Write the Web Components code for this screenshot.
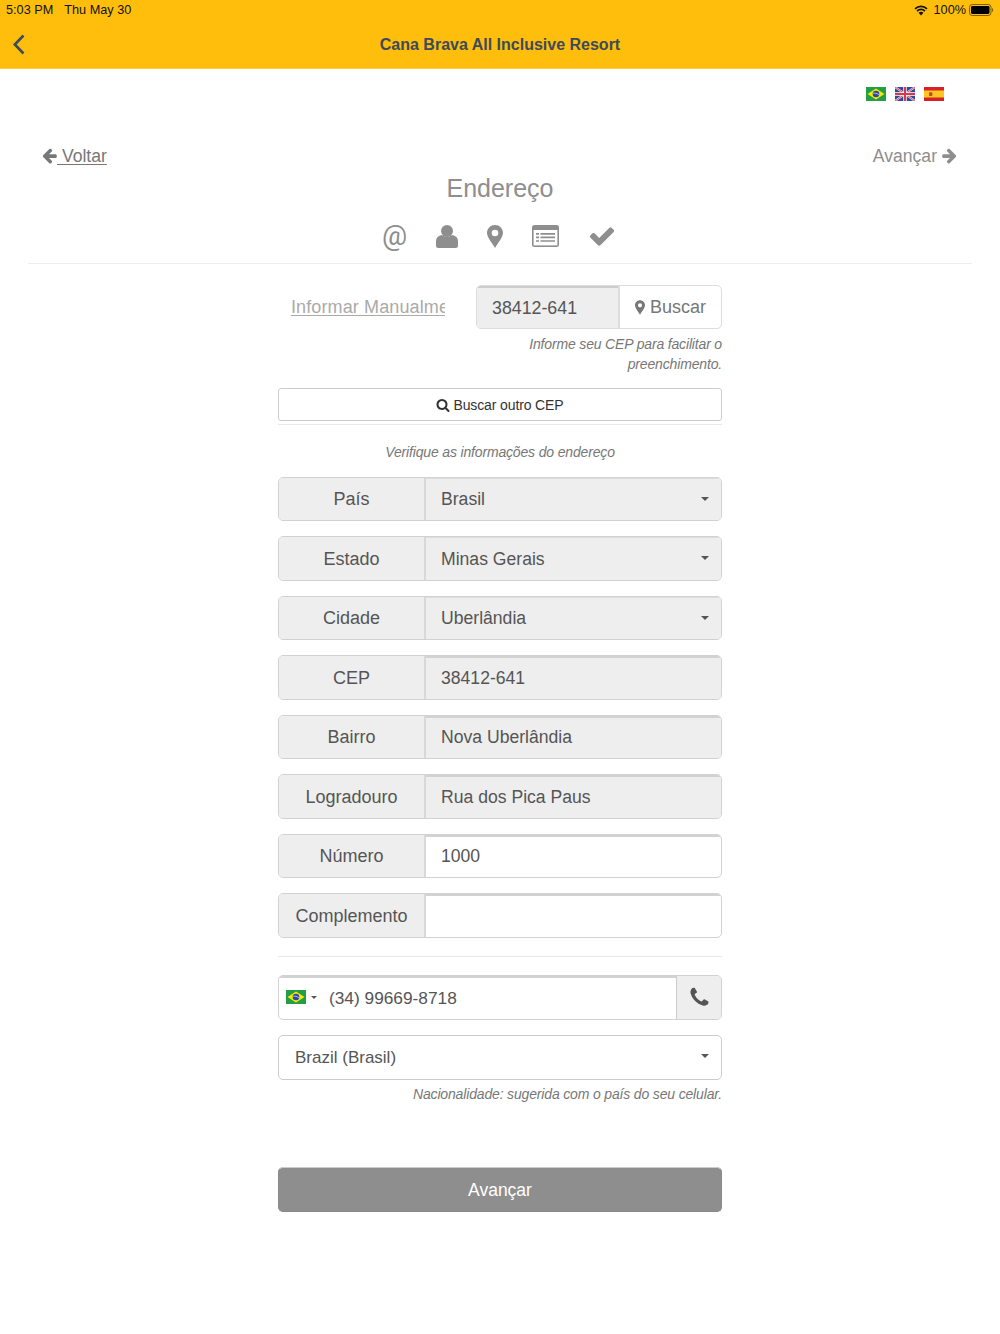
<!DOCTYPE html>
<html lang="pt">
<head>
<meta charset="utf-8">
<title>Endereço</title>
<style>
  html, body { margin: 0; padding: 0; background: #fff; }
  body { font-family: "Liberation Sans", Arial, sans-serif; color: #555; }
</style>
</head>
<body>
<app-header title-text="Cana Brava All Inclusive Resort"></app-header>
<flag-row></flag-row>
<step-nav></step-nav>
<step-title>Endereço</step-title>
<step-icons></step-icons>
<form-column>
  <cep-search></cep-search>
  <outline-button>Buscar outro CEP</outline-button>
  <hint-text class="verify">Verifique as informações do endereço</hint-text>
  <field-row label="País" value="Brasil" kind="select"></field-row>
  <field-row label="Estado" value="Minas Gerais" kind="select"></field-row>
  <field-row label="Cidade" value="Uberlândia" kind="select"></field-row>
  <field-row label="CEP" value="38412-641" kind="readonly"></field-row>
  <field-row label="Bairro" value="Nova Uberlândia" kind="readonly"></field-row>
  <field-row label="Logradouro" value="Rua dos Pica Paus" kind="readonly"></field-row>
  <field-row label="Número" value="1000"></field-row>
  <field-row label="Complemento" value=""></field-row>
  <form-rule></form-rule>
  <phone-field number="(34) 99669-8718"></phone-field>
  <select-field value="Brazil (Brasil)"></select-field>
  <hint-text class="nation">Nacionalidade: sugerida com o país do seu celular.</hint-text>
  <primary-button>Avançar</primary-button>
</form-column>

<script>
const ICONS = {
  left: 'M1664 896v128q0 53-32.5 90.5t-84.5 37.5h-704l293 294q38 36 38 90t-38 90l-75 76q-37 37-90 37-52 0-91-37l-651-652q-37-37-37-90 0-52 37-91l651-650q38-38 91-38 52 0 90 38l75 74q38 38 38 91t-38 91l-293 293h704q52 0 84.5 37.5t32.5 90.5z',
  right: 'M1600 960q0 54-37 91l-651 651q-39 37-91 37-51 0-90-37l-75-75q-38-38-38-91t38-91l293-293h-704q-52 0-84.5-37.5t-32.5-90.5v-128q0-53 32.5-90.5t84.5-37.5h704l-293-294q-38-36-38-90t38-90l75-75q38-38 90-38 53 0 91 38l651 651q37 35 37 90z',
  check: 'M1671 566q0 40-28 68l-724 724-136 136q-28 28-68 28t-68-28l-136-136-362-362q-28-28-28-68t28-68l136-136q28-28 68-28t68 28l294 295 656-657q28-28 68-28t68 28l136 136q28 28 28 68z',
  search: 'M1216 832q0-185-131.5-316.5t-316.5-131.5-316.5 131.5-131.5 316.5 131.5 316.5 316.5 131.5 316.5-131.5 131.5-316.5zm512 832q0 52-38 90t-90 38q-54 0-90-38l-343-342q-179 124-399 124-143 0-273.5-55.5t-225-150-150-225-55.5-273.5 55.5-273.5 150-225 225-150 273.5-55.5 273.5 55.5 225 150 150 225 55.5 273.5q0 220-124 399l343 343q37 37 37 90z',
  phone: 'M1600 1240q0 27-10 70.5t-21 68.5q-21 50-122 106-94 51-186 51-27 0-53-3.5t-57.5-12.5-47-14.5-55.5-20.5-49-18q-98-35-175-83-127-79-264-216t-216-264q-48-77-83-175-3-9-18-49t-20.5-55.5-14.5-47-12.5-57.5-3.5-53q0-92 51-186 56-101 106-122 25-11 68.5-21t70.5-10q14 0 21 3 18 6 53 76 11 19 30 54t35 63.5 31 53.5q3 4 17.5 25t21.5 35.5 7 28.5q0 20-28.5 50t-62 55-62 53-28.5 46q0 9 5 22.5t8.5 20.5 14 24 11.5 19q76 137 174 235t235 174q2 1 19 11.5t24 14 20.5 8.5 22.5 5q18 0 46-28.5t53-62 55-62 50-28.5q14 0 28.5 7t35.5 21.5 25 17.5q25 15 53.5 31t63.5 35 54 30q70 35 76 53 3 7 3 21z'
};
const icon = (name, size, extra = '') =>
  `<svg ${extra} width="${size}" height="${size}" viewBox="0 0 1792 1792" fill="currentColor" style="display:block;flex:none"><path d="${ICONS[name]}"/></svg>`;

// teardrop pin, scaled by width
const marker = (w, h) => `<svg width="${w}" height="${h}" viewBox="0 0 16 23" style="display:block;flex:none"><path fill="currentColor" fill-rule="evenodd" d="M8 0C3.6 0 0 3.5 0 8c0 4 5 10 8 15 3-5 8-11 8-15 0-4.500-3.600-8-8-8zm0 4.700a3.300 3.300 0 1 1 0 6.600 3.300 3.300 0 0 1 0-6.600z"/></svg>`;

const FLAGS = {
  br: `<rect width="20" height="14" fill="#229e45"/><path d="M10 1.500 18.500 7 10 12.500 1.500 7z" fill="#f8e509"/><circle cx="10" cy="7" r="3.300" fill="#2b49a3"/><path d="M7 6.200q3-.6 6 1.400" stroke="#fff" stroke-width=".6" fill="none"/>`,
  uk: `<rect width="20" height="14" fill="#2a4ba0"/><path d="M0 0 20 14M20 0 0 14" stroke="#f0d8dc" stroke-width="2"/><path d="M0 0 20 14M20 0 0 14" stroke="#d8394a" stroke-width=".8"/><path d="M10 0v14M0 7h20" stroke="#fff" stroke-width="3.400"/><path d="M10 0v14M0 7h20" stroke="#d8394a" stroke-width="2"/>`,
  es: `<rect width="20" height="14" fill="#d8202c"/><rect y="3.500" width="20" height="7" fill="#f9c71f"/><rect x="5" y="5.200" width="3.400" height="3.800" rx=".8" fill="#c4472a"/>`
};
const flag = (name) => `<svg width="20" height="14" viewBox="0 0 20 14" style="display:block;flex:none">${FLAGS[name]}</svg>`;

const caret = `<span style="flex:none;width:0;height:0;border-left:4px solid transparent;border-right:4px solid transparent;border-top:4px solid #555"></span>`;

// small helper so the simple elements stay one-liners
function define(tag, css, html) {
  customElements.define(tag, class extends HTMLElement {
    constructor() {
      super();
      this.attachShadow({ mode: 'open' });
    }
    connectedCallback() {
      const body = typeof html === 'function' ? html(this) : html;
      this.shadowRoot.innerHTML = `<style>${css}</style>${body}`;
    }
  });
}

define('app-header', `
  :host { display: block; height: 69px; background: #ffbe0b; color: #111; box-shadow: inset 0 -1px 0 #ffd050; }
  .status { height: 20px; display: flex; align-items: center; padding: 0 6px; font-size: 12.7px; gap: 11px; }
  .status .right { margin-left: auto; display: flex; align-items: center; gap: 3px; }
  .status .wifi { margin-right: 3px; }
  .bar { height: 49px; position: relative; display: flex; align-items: center; justify-content: center; }
  .title { font-size: 16px; font-weight: 700; color: #3d4a5c; }
  .back { position: absolute; left: 12px; top: 13px; }
`, (el) => `
  <div class="status">
    <span>5:03 PM</span><span>Thu May 30</span>
    <span class="right">
      <svg class="wifi" width="14" height="11" viewBox="0 0 16 12"><path d="M8 11.600 5.200 8.700a4 4 0 0 1 5.600 0z" fill="#111"/><path d="M3.500 6.700a6.400 6.400 0 0 1 9 0M1.200 4.200a9.600 9.600 0 0 1 13.600 0" stroke="#111" stroke-width="2" fill="none"/></svg>
      <span>100%</span>
      <svg width="25" height="12" viewBox="0 0 25 12"><rect x=".5" y=".5" width="21.500" height="11" rx="2.800" fill="none" stroke="#7a5c0a"/><rect x="2" y="2" width="18.500" height="8" rx="1.400" fill="#000"/><path d="M23 4v4q1.200-.5 1.200-2T23 4z" fill="#7a5c0a"/></svg>
    </span>
  </div>
  <div class="bar">
    <svg class="back" width="14" height="23" viewBox="0 0 14 23"><path d="M11.500 2.500 2.800 11.500l8.700 9" stroke="#3d4a5c" stroke-width="2.600" fill="none"/></svg>
    <span class="title">${el.getAttribute('title-text')}</span>
  </div>
`);

define('flag-row', `
  :host { display: flex; justify-content: flex-end; gap: 9px; padding: 18px 56px 0 0; height: 14px; }
`, `${flag('br')}${flag('uk')}${flag('es')}`);

define('step-nav', `
  :host { display: flex; justify-content: space-between; align-items: center; height: 22px; margin-top: 44px; padding: 0 42px 0 41px; font-size: 17.6px; }
  a { display: flex; align-items: center; }
  a svg { margin-top: -1px; }
  .back { color: #777; text-decoration: underline; text-underline-offset: 2px; white-space: pre; }
  .back span { margin-left: -1px; }
  .next { color: #8e8e8e; gap: 4px; }
`, `
  <a class="back">${icon('left', 17)}<span> Voltar</span></a>
  <a class="next"><span>Avançar</span>${icon('right', 17)}</a>
`);

define('step-title', `
  :host { display: block; height: 28px; margin-top: 7px; line-height: 28px; text-align: center; font-size: 25px; color: #8e8e8e; }
`, `<slot></slot>`);

define('step-icons', `
  :host { display: flex; justify-content: center; align-items: center; gap: 29px; height: 34px; margin: 17px 28px 0; padding: 0 2px 10px 0; border-bottom: 1px solid #eee; color: #8e8e8e; }
  .at { font-family: Roboto, "Liberation Sans", sans-serif; font-weight: 400; font-size: 28px; line-height: 34px; width: 25px; display: flex; justify-content: center; }
`, `
  <span class="at">@</span>
  <svg width="22" height="23" viewBox="0 0 22 23" style="display:block;flex:none"><circle cx="11" cy="6" r="6" fill="#8e8e8e"/><path fill="#8e8e8e" d="M0 20.500V16q0-4.500 5.500-6 5.500 3.500 11 0 5.500 1.500 5.500 6v4.500q0 2.500-2.500 2.500h-17Q0 23 0 20.500z"/></svg>
  ${marker(16, 23)}
  <svg width="27" height="22" viewBox="0 0 27 22" style="display:block;flex:none"><rect width="27" height="22" rx="2.500" fill="#8e8e8e"/><rect x="1.600" y="5" width="23.800" height="15.400" fill="#fff"/><path d="M4 8.800h3M4 12.400h3M4 16h3M8.500 8.800h14.500M8.500 12.400h14.500M8.500 16h14.500" stroke="#8e8e8e" stroke-width="1.700"/></svg>
  ${icon('check', 28)}
`);

define('form-column', `
  :host { display: block; width: 444px; margin: 21px auto 0; }
`, `<slot></slot>`);

define('cep-search', `
  :host { display: block; }
  .row { display: flex; align-items: center; height: 44px; }
  .manual { width: 154px; margin-left: 13px; margin-right: 31px; overflow: hidden; white-space: nowrap; font-size: 18px; letter-spacing: .12px; color: #aaa; text-decoration: underline; text-underline-offset: 2px; flex: none; }
  .group { display: flex; flex: 1; height: 44px; box-sizing: border-box; border: 1px solid #ddd; border-radius: 5px; overflow: hidden; font-size: 18px; }
  .cep { width: 143px; flex: none; box-sizing: border-box; background: #eee; border-right: 2px solid #ddd; box-shadow: inset 0 2px 0 #ccc; padding: 2px 15px 0; display: flex; align-items: center; color: #555; font-size: 17.8px; }
  .find { flex: 1; display: flex; align-items: center; justify-content: center; gap: 5px; color: #777; padding-top: 1px; }
  .help { margin: 5px 0 0 auto; width: 230px; text-align: right; font-size: 14px; letter-spacing: -.16px; line-height: 20px; font-style: italic; color: #777; }
`, `
  <div class="row">
    <span class="manual">Informar Manualmente</span>
    <div class="group">
      <span class="cep">38412-641</span>
      <span class="find">${marker(10, 15)}Buscar</span>
    </div>
  </div>
  <div class="help">Informe seu CEP para facilitar o preenchimento.</div>
`);

define('outline-button', `
  :host { display: flex; align-items: center; justify-content: center; gap: 3px; height: 33px; box-sizing: border-box; margin-top: 14px; border: 1px solid #ccc; border-radius: 3px; font-size: 14px; letter-spacing: -.12px; color: #333; }
`, `${icon('search', 14)}<slot></slot>`);

define('hint-text', `
  :host { display: block; font-size: 14px; letter-spacing: -.16px; font-style: italic; line-height: 20px; color: #777; }
  :host(.verify) { text-align: center; margin-top: 3px; padding-top: 17px; margin-bottom: 14.5px; border-top: 1px solid #e8e8e8; }
  :host(.nation) { text-align: right; margin-top: 4px; height: 20px; }
`, `<slot></slot>`);

define('field-row', `
  :host { display: flex; height: 44.5px; box-sizing: border-box; margin-bottom: 15px; border: 1px solid #d2d2d2; border-radius: 5px; overflow: hidden; font-size: 18px; color: #555; }
  .label { width: 147px; flex: none; box-sizing: border-box; background: #eee; border-right: 2px solid #d8d8d8; display: flex; align-items: center; justify-content: center; padding-top: 2px; }
  .value { flex: 1; display: flex; align-items: center; justify-content: space-between; padding: 0 12px 0 15px; font-size: 17.6px; box-shadow: inset 0 2px 0 #d2d2d2; }
  .value .text { padding-top: 2px; }
  .select { background: #eee; box-shadow: inset 0 1px 0 #ddd; }
  .readonly { background: #eee; }
`, (el) => {
  const kind = el.getAttribute('kind') || '';
  return `<span class="label">${el.getAttribute('label')}</span>
    <span class="value ${kind}"><span class="text">${el.getAttribute('value')}</span>${kind === 'select' ? caret : ''}</span>`;
});

define('form-rule', `
  :host { display: block; height: 1px; margin: 18.5px 0 18px; background: #e8e8e8; }
`, ``);

define('phone-field', `
  :host { display: flex; height: 44.5px; box-sizing: border-box; border: 1px solid #d2d2d2; border-radius: 5px; overflow: hidden; font-size: 17.3px; color: #555; }
  .flag { display: flex; align-items: center; gap: 5px; padding-left: 7px; width: 43px; flex: none; box-shadow: inset 0 2px 0 #d2d2d2; }
  .flag .tri { width: 0; height: 0; border-left: 3px solid transparent; border-right: 3px solid transparent; border-top: 3px solid #555; }
  .num { flex: 1; display: flex; align-items: center; padding: 2px 0 0; box-shadow: inset 0 2px 0 #d2d2d2; }
  .call { width: 45px; flex: none; box-sizing: border-box; background: #eee; border-left: 1px solid #ccc; display: flex; align-items: center; justify-content: center; }
`, (el) => `
  <span class="flag">${flag('br')}<span class="tri"></span></span>
  <span class="num">${el.getAttribute('number')}</span>
  <span class="call">${icon('phone', 23)}</span>
`);

define('select-field', `
  :host { display: flex; align-items: center; justify-content: space-between; height: 44.5px; box-sizing: border-box; margin-top: 15.5px; padding: 0 12px 0 16px; border: 1px solid #ccc; border-radius: 5px; font-size: 17px; color: #555; }
  span { padding-top: 2px; }
`, (el) => `<span>${el.getAttribute('value')}</span>${caret}`);

define('primary-button', `
  :host { display: flex; align-items: center; justify-content: center; height: 45px; box-sizing: border-box; margin-top: 63.5px; background: #8e8e8e; border: 1px solid #8a8a8a; border-top-color: #ccc; border-radius: 5px; font-size: 17.5px; color: #fff; padding-top: 1px; }
`, `<slot></slot>`);
</script>
</body>
</html>
